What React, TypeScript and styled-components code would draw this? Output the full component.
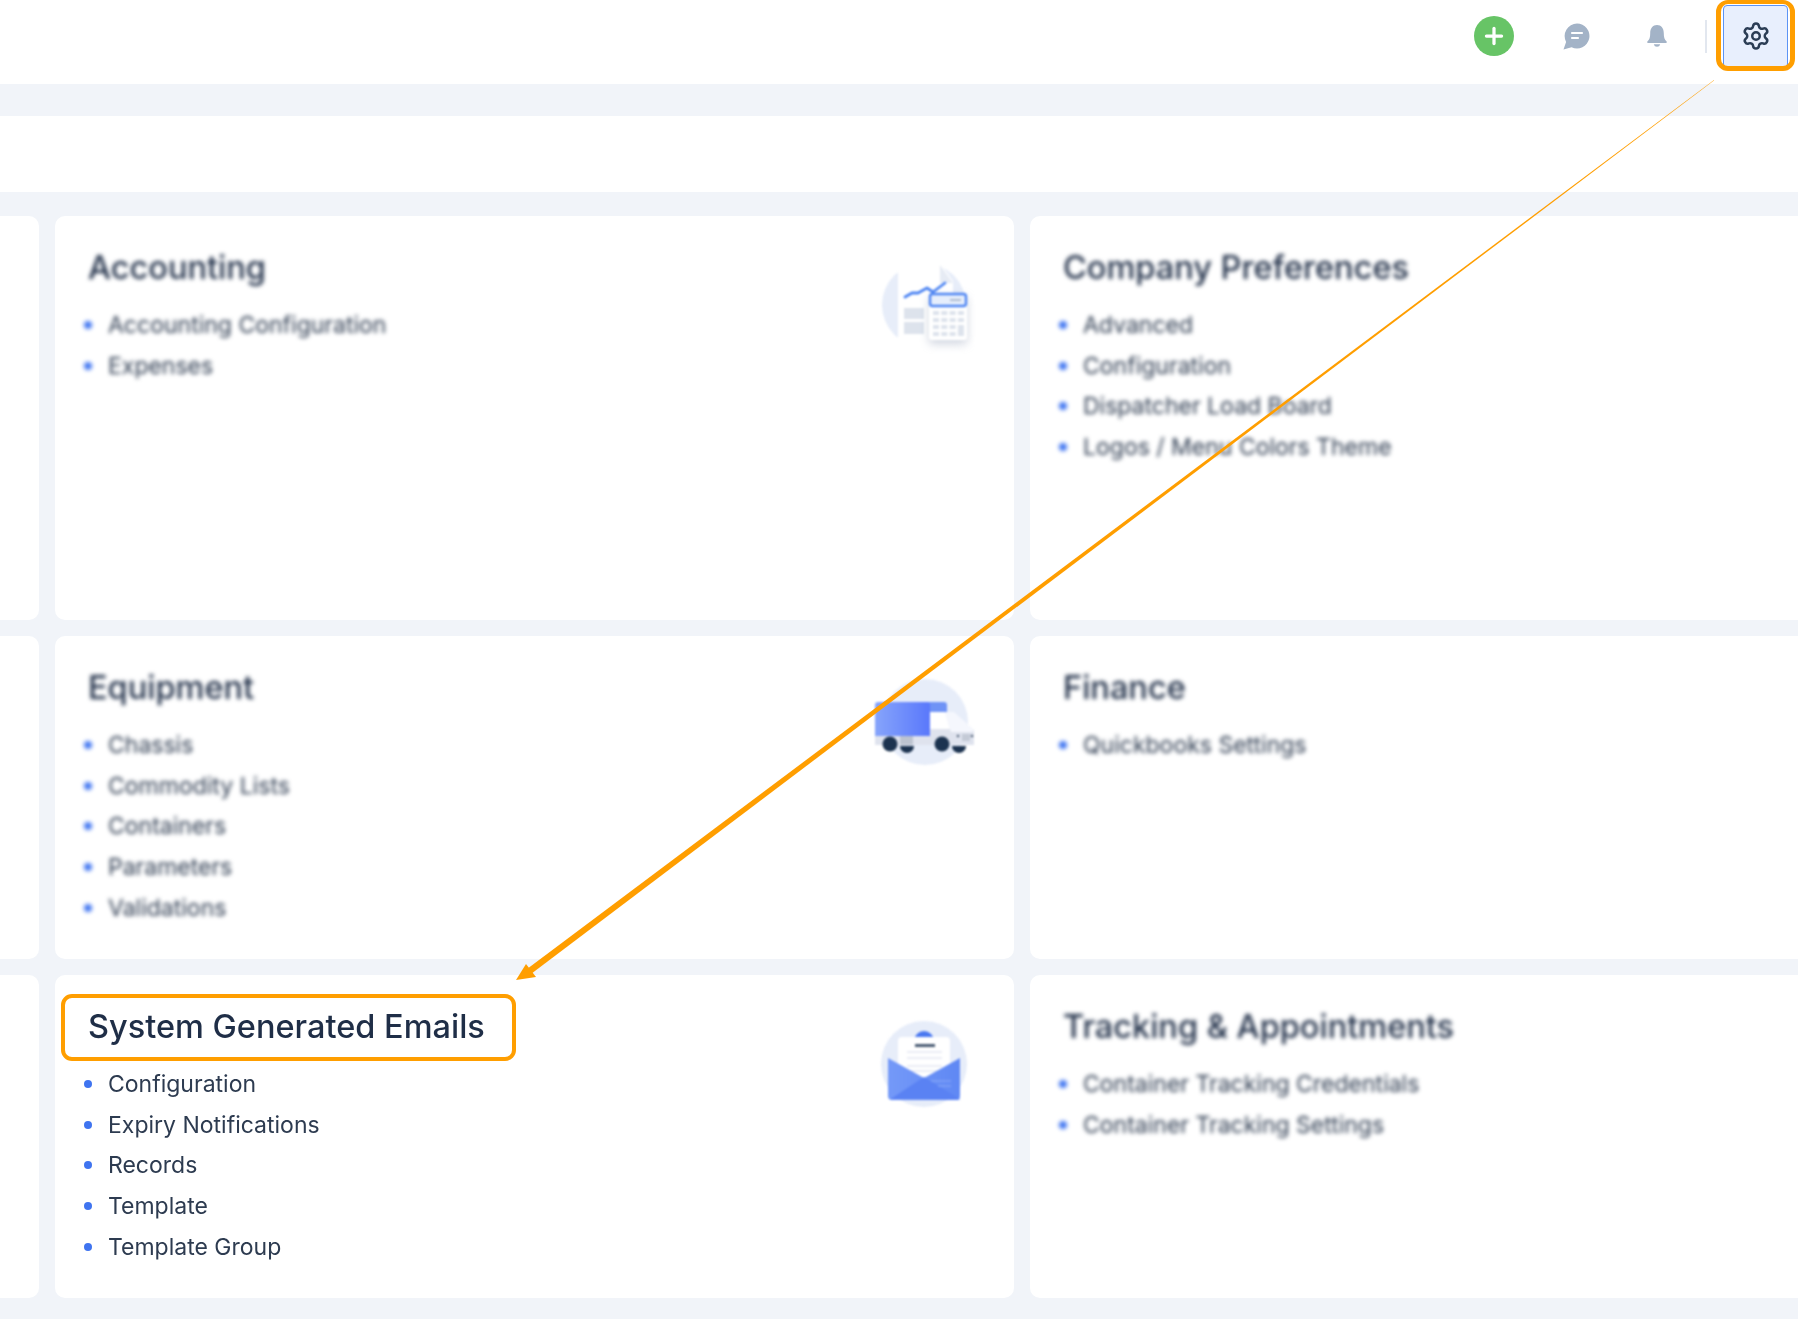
import React from "react";
import styled, { createGlobalStyle } from "styled-components";
import { Plus, Settings } from "lucide-react";

const GlobalStyle = createGlobalStyle`
  html, body {
    margin: 0;
    padding: 0;
    background: #f1f4f9;
  }
  body {
    font-family: Inter, "Noto Sans", "Liberation Sans", sans-serif;
  }
`;

const Page = styled.div`
  position: relative;
  width: 1798px;
  height: 1319px;
  overflow: hidden;
  background: #f1f4f9;
`;

const Header = styled.header`
  height: 84px;
  background: #fff;
  display: flex;
  align-items: center;
  justify-content: flex-end;
  padding: 0 10px 12px 0;
  box-sizing: border-box;
`;

const AddButton = styled.div`
  width: 40px;
  height: 40px;
  border-radius: 50%;
  background: #67c466;
  color: #fff;
  display: flex;
  align-items: center;
  justify-content: center;
  filter: blur(0.6px);
`;

const HeaderIcon = styled.div<{ $gap: number }>`
  width: 30px;
  height: 30px;
  margin-left: ${(p) => p.$gap}px;
  display: flex;
  align-items: center;
  justify-content: center;
  filter: blur(0.6px);
`;

const Divider = styled.div`
  width: 2px;
  height: 33px;
  margin-left: 33px;
  background: #e2e7ef;
`;

const SettingsButton = styled.div`
  width: 65px;
  height: 63px;
  margin-left: 16px;
  box-sizing: border-box;
  border: 1px solid #5b93f5;
  border-radius: 4px;
  background: #e8effd;
  color: #2b3d55;
  display: flex;
  align-items: center;
  justify-content: center;
`;

const Band = styled.div`
  height: 32px;
`;

const Toolbar = styled.div`
  height: 76px;
  background: #fff;
`;

const Board = styled.main`
  display: grid;
  grid-template-columns: 39px 959px 768px;
  grid-template-rows: 404px 323px 323px;
  gap: 16px;
  padding-top: 24px;
`;

const Card = styled.section<{ $open?: boolean }>`
  background: #fff;
  border-radius: ${(p) => (p.$open ? "10px 0 0 10px" : "10px")};
  display: flex;
  justify-content: space-between;
  padding: 32px 40px 0 32px;
  box-sizing: border-box;
  overflow: hidden;
`;

const CutOffCard = styled.div`
  background: #fff;
  border-radius: 0 10px 10px 0;
`;

const Body = styled.div<{ $sharp?: boolean }>`
  filter: ${(p) => (p.$sharp ? "blur(0.45px)" : "blur(1.9px)")};
`;

const Title = styled.h2`
  margin: 0 0 17px 1px;
  font-size: 32.5px;
  line-height: 40px;
  font-weight: 500;
  color: #1f2e47;
  white-space: nowrap;
`;

const List = styled.ul`
  margin: 0;
  padding: 0;
  list-style: none;
`;

const Item = styled.li`
  display: flex;
  align-items: center;
  height: 40.6px;
  font-size: 23px;
  font-weight: 400;
  color: #2d3b50;
  white-space: nowrap;
  &::before {
    content: "";
    width: 8px;
    height: 8px;
    margin-right: 16px;
    margin-left: -3px;
    border-radius: 50%;
    background: #3f74f0;
    flex: none;
  }
`;

const Picture = styled.div`
  width: 100px;
  height: 100px;
  margin-top: 7px;
  flex: none;
  filter: blur(0.8px);
`;

const CalculatorShadow = styled.rect`
  filter: drop-shadow(0 4px 5px rgba(120, 135, 165, 0.35));
`;

const Overlay = styled.svg`
  position: absolute;
  left: 0;
  top: 0;
  pointer-events: none;
`;

const SettingsMark = styled.div`
  position: absolute;
  left: 1716px;
  top: 0;
  width: 79px;
  height: 71px;
  box-sizing: border-box;
  border: solid #ff9e00;
  border-width: 4px 5px 5px 5px;
  border-radius: 12px;
`;

const TitleMark = styled.div`
  position: absolute;
  left: 61px;
  top: 994px;
  width: 455px;
  height: 67px;
  box-sizing: border-box;
  border: 4px solid #ff9e00;
  border-radius: 11px;
`;

const ChatIcon = () => (
  <svg width="28" height="28" viewBox="0 0 28 28">
    <path d="M15 1.5a12.5 12.5 0 1 1-5.4 23.8L1.5 27.5l2.6-7.6A12.5 12.5 0 0 1 15 1.5z" fill="#a3b3c7" />
    <path d="M10 11h10M10 16h6" stroke="#fff" strokeWidth="2.2" strokeLinecap="round" />
  </svg>
);

const BellIcon = () => (
  <svg width="22" height="24" viewBox="0 0 24 26">
    <path
      d="M12 1C7.4 1 4.6 4.6 4.6 10c0 4.6-.8 7-3.1 9.1-.5.5-.2 1.4.6 1.4h19.8c.8 0 1.1-.9.6-1.4-2.3-2.1-3.1-4.5-3.1-9.1C19.4 4.6 16.6 1 12 1z"
      fill="#a3b3c7"
    />
    <path d="M8.5 22a3.6 3.6 0 0 0 7 0z" fill="#a3b3c7" />
  </svg>
);

const AccountingArt = () => (
  <svg width="100" height="100" viewBox="0 0 100 100">
    <circle cx="50" cy="50" r="42" fill="#e7edf9" />
    <path d="M24 8h42l13 18v68H24z" fill="#fff" />
    <path d="M66 10l13 18H66z" fill="#e6ebf4" />
    <path
      d="M31 42l7-4h6l9-5 6 4 12-9"
      fill="none"
      stroke="#4f86f3"
      strokeWidth="2.8"
      strokeLinecap="round"
      strokeLinejoin="round"
    />
    <rect x="30" y="53" width="20" height="11" fill="#dde3ec" />
    <rect x="30" y="67" width="20" height="12" fill="#dde3ec" />
    <CalculatorShadow x="55" y="38" width="38" height="47" rx="3" fill="#fff" />
    <rect x="56" y="39" width="36" height="12" rx="2.5" fill="#e6eefc" stroke="#4f86f3" strokeWidth="2.4" />
    <rect x="76" y="44" width="11" height="2" fill="#aebbd0" />
    {[0, 1, 2, 3].map((r) =>
      [0, 1, 2, 3].map((c) =>
        c === 3 && r === 3 ? null : (
          <rect
            key={`${r}-${c}`}
            x={59 + c * 8.3}
            y={56 + r * 7}
            width="6"
            height={c === 3 && r === 2 ? 11 : 4}
            fill="#dde3ec"
          />
        ),
      ),
    )}
  </svg>
);

const TruckArt = () => (
  <svg width="100" height="100" viewBox="0 0 100 100">
    <defs>
      <linearGradient id="box" x1="0" x2="1">
        <stop offset="0" stopColor="#86a4fb" />
        <stop offset="1" stopColor="#5a78fb" />
      </linearGradient>
    </defs>
    <circle cx="51" cy="47" r="43" fill="#e7edf9" />
    <path d="M52 27h18a3 3 0 0 1 3 3v7H52z" fill="#6f93f6" />
    <path d="M1 30a3 3 0 0 1 3-3h49a3 3 0 0 1 3 3v31H1z" fill="url(#box)" />
    <path d="M1 61h55v-7h43l2 4v12H1z" fill="#dfe3ee" />
    <rect x="26" y="61" width="13" height="9" fill="#bcc3d0" />
    <path d="M56 37h15l5 17H56z" fill="#fff" />
    <path d="M71 37h9l19 17v3H77z" fill="#f5f7fd" />
    <rect x="88" y="59" width="8" height="7" fill="#c4cad6" />
    <circle cx="84" cy="61" r="1.3" fill="#55657c" />
    <circle cx="98" cy="61" r="1.3" fill="#55657c" />
    <circle cx="16" cy="69" r="7.5" fill="#1c3350" />
    <path d="M26 71h14a7 7 0 0 1-14 0z" fill="#1c3350" />
    <circle cx="68" cy="69" r="7.5" fill="#1c3350" />
    <path d="M78 71h14a7 7 0 0 1-14 0z" fill="#1c3350" />
  </svg>
);

const EmailArt = () => (
  <svg width="100" height="100" viewBox="0 0 100 100">
    <defs>
      <linearGradient id="mail" x1="0" x2="1">
        <stop offset="0" stopColor="#7499f8" />
        <stop offset="1" stopColor="#5f88f4" />
      </linearGradient>
    </defs>
    <circle cx="50" cy="50" r="43" fill="#e7edf9" />
    <circle cx="50" cy="27" r="10" fill="#4a78f0" />
    <rect x="24" y="23" width="52" height="50" rx="4" fill="#fff" />
    <rect x="41" y="30" width="20" height="3" fill="#4a5b73" />
    <path d="M33 38h35M33 44h35M33 52h35M33 57h35" stroke="#e3e8f2" strokeWidth="1.6" />
    <path d="M14 44l36 20 36-20v38a4 4 0 0 1-4 4H18a4 4 0 0 1-4-4z" fill="url(#mail)" />
    <path d="M16 85.5L50 63l36 22a4 4 0 0 1-4 .5H18z" fill="#5a82f3" />
    <path d="M57 67h20M64 72h13" stroke="#8eabf8" strokeWidth="1.2" />
  </svg>
);

type CardData = {
  title: string;
  items: string[];
  art?: React.ReactNode;
  sharp?: boolean;
};

const rows: CardData[][] = [
  [
    {
      title: "Accounting",
      items: ["Accounting Configuration", "Expenses"],
      art: <AccountingArt />,
    },
    {
      title: "Company Preferences",
      items: ["Advanced", "Configuration", "Dispatcher Load Board", "Logos / Menu Colors Theme"],
    },
  ],
  [
    {
      title: "Equipment",
      items: ["Chassis", "Commodity Lists", "Containers", "Parameters", "Validations"],
      art: <TruckArt />,
    },
    {
      title: "Finance",
      items: ["Quickbooks Settings"],
    },
  ],
  [
    {
      title: "System Generated Emails",
      items: ["Configuration", "Expiry Notifications", "Records", "Template", "Template Group"],
      art: <EmailArt />,
      sharp: true,
    },
    {
      title: "Tracking & Appointments",
      items: ["Container Tracking Credentials", "Container Tracking Settings"],
    },
  ],
];

const SettingCard = ({ card, open }: { card: CardData; open?: boolean }) => (
  <Card $open={open}>
    <Body $sharp={card.sharp}>
      <Title>{card.title}</Title>
      <List>
        {card.items.map((item) => (
          <Item key={item}>{item}</Item>
        ))}
      </List>
    </Body>
    {card.art && <Picture>{card.art}</Picture>}
  </Card>
);

const App = () => (
  <Page>
    <GlobalStyle />
    <Header>
      <AddButton>
        <Plus size={26} strokeWidth={3} />
      </AddButton>
      <HeaderIcon $gap={47}>
        <ChatIcon />
      </HeaderIcon>
      <HeaderIcon $gap={51}>
        <BellIcon />
      </HeaderIcon>
      <Divider />
      <SettingsButton>
        <Settings size={30} strokeWidth={2} />
      </SettingsButton>
    </Header>
    <Band />
    <Toolbar />
    <Board>
      {rows.map((row) => (
        <React.Fragment key={row[0].title}>
          <CutOffCard />
          <SettingCard card={row[0]} />
          <SettingCard card={row[1]} open />
        </React.Fragment>
      ))}
    </Board>
    <SettingsMark />
    <TitleMark />
    <Overlay width="1798" height="1319" viewBox="0 0 1798 1319">
      <polygon points="1714,80 1714,80.4 527,977 523,972" fill="#ff9e00" />
      <polygon points="516,980 526,964 536,977" fill="#ff9e00" />
    </Overlay>
  </Page>
);

export default App;
